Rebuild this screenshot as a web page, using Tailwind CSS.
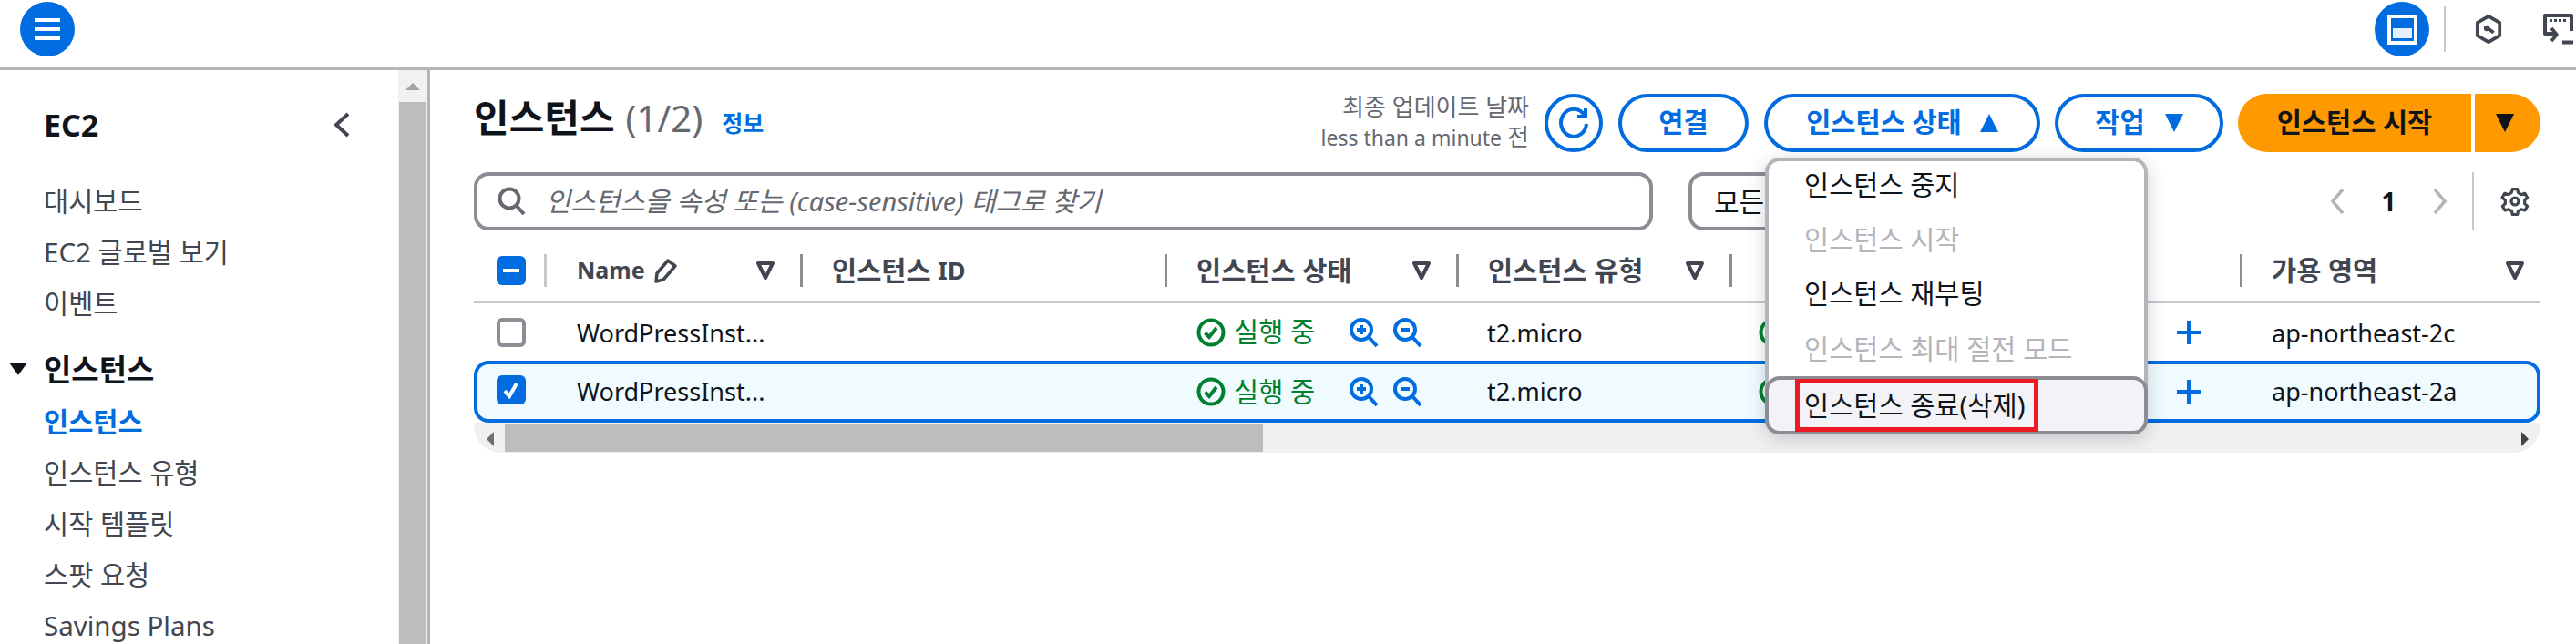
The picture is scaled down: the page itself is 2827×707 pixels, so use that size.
<!DOCTYPE html>
<html lang="ko">
  <head>
    <meta charset="UTF-8" />
    <title>인스턴스 - EC2</title>
    <script src="https://cdn.jsdelivr.net/npm/@tailwindcss/browser@4"></script>
  </head>
  <body class="w-[2827px] h-[707px] overflow-hidden bg-white text-[#0f141a] font-['Noto_Sans','Noto_Sans_CJK_KR',sans-serif]">
    <!-- top bar -->
    <header class="h-[77px] border-b-[3px] border-[#b4b4bb] flex items-center pb-[10px] pl-[22px] pr-[3px]">
      <button class="w-[60px] h-[60px] rounded-full bg-[#006ce0] flex flex-col items-center justify-center gap-[6px]">
        <span class="block w-[28px] h-[4px] bg-white"></span>
        <span class="block w-[28px] h-[4px] bg-white"></span>
        <span class="block w-[28px] h-[4px] bg-white"></span>
      </button>
      <div class="flex-1"></div>
      <button class="w-[60px] h-[60px] rounded-full bg-[#006ce0] flex items-center justify-center">
        <span class="w-[33px] h-[33px] border-[4px] border-white bg-[#006ce0] flex items-end justify-center pb-[3px]"><span class="block w-[21px] h-[11px] bg-white/90"></span></span>
      </button>
      <div class="w-[2px] h-[50px] bg-[#c6c6cd] ml-[16px] mr-[32px]"></div>
      <svg class="w-[30px] h-[32px] text-[#424650] mr-[45px]" viewBox="0 0 32 34" fill="none" stroke="currentColor" stroke-width="4" stroke-linejoin="round">
        <path d="M16 2 29 9.500V24.500L16 32 3 24.500V9.500Z" />
        <circle cx="14" cy="16" r="2.500" fill="currentColor" stroke-width="2" />
        <path d="M15 16 22 21" />
      </svg>
      <svg class="w-[33px] h-[34px] text-[#424650]" viewBox="0 0 33 34" fill="none" stroke="currentColor" stroke-width="4" stroke-linejoin="round">
        <path d="M11 22H2V2H31V19" />
        <path d="M7 7.500h3M12 7.500h3M17 7.500h3M22 7.500h3" stroke-width="3" />
        <path d="M9 16 15 23 9 30M4 23H14" stroke-width="3.500" />
        <path d="M21 31.500H33" stroke-width="4" />
      </svg>
    </header>

    <div class="flex h-[630px]">
      <!-- side navigation -->
      <aside class="w-[472px] shrink-0 flex border-r-[3px] border-[#b4b4bb]">
        <nav class="w-[437px] shrink-0 pl-[48px] pr-[48px] text-[29.5px] text-[#424650]">
          <div class="h-[116px] pt-[4px] flex items-center justify-between pr-[4px]">
            <span class="text-[34px] font-bold text-[#0f141a]">EC2</span>
            <svg class="w-[20px] h-[30px]" viewBox="0 0 20 30" fill="none" stroke="#424650" stroke-width="4"><path d="M17 3 4 15 17 27" /></svg>
          </div>
          <ul class="flex flex-col">
            <li class="h-[56px] flex items-center">대시보드</li>
            <li class="h-[56px] flex items-center">EC2 글로벌 보기</li>
            <li class="h-[56px] flex items-center">이벤트</li>
          </ul>
          <div class="relative h-[58px] mt-[16px] flex items-center font-bold text-[#0f141a] text-[33px]">
            <span class="absolute left-[-38px] top-[21px] w-0 h-0 border-x-[10px] border-t-[14px] border-x-transparent border-t-[#0f141a]"></span>
            인스턴스
          </div>
          <ul class="flex flex-col">
            <li class="h-[56px] flex items-center font-bold text-[#006ce0]">인스턴스</li>
            <li class="h-[56px] flex items-center">인스턴스 유형</li>
            <li class="h-[56px] flex items-center">시작 템플릿</li>
            <li class="h-[56px] flex items-center">스팟 요청</li>
            <li class="h-[56px] flex items-center">Savings Plans</li>
          </ul>
        </nav>
        <div class="w-[32px] bg-[#f1f1f1] flex flex-col items-center">
          <div class="h-[35px] flex items-center justify-center"><span class="w-0 h-0 border-x-[8px] border-b-[8px] border-x-transparent border-b-[#a3a3a3]"></span></div>
          <div class="w-[30px] flex-1 bg-[#bdbdbd]"></div>
        </div>
      </aside>

      <!-- main content -->
      <main class="relative flex-1 pl-[48px] pr-[39px] pt-[24px]">
        <div class="flex items-start justify-between h-[64px]">
          <div class="flex items-baseline">
            <h1 class="text-[42px] font-bold leading-[56px]">인스턴스</h1>
            <span class="text-[40px] leading-[56px] text-[#656871] ml-[12px]">(1/2)</span>
            <a class="text-[25px] font-bold text-[#006ce0] ml-[21px]">정보</a>
          </div>
          <div class="flex items-center">
            <div class="text-right text-[23px] leading-[33px] text-[#656871] mr-[17px]">
              <div class="text-[26px]">최종 업데이트 날짜</div>
              <div>less than a minute <span class="text-[26px]">전</span></div>
            </div>
            <button class="w-[64px] h-[64px] rounded-full border-[4px] border-[#006ce0] bg-white flex items-center justify-center mr-[17px]">
              <svg class="w-[34px] h-[36px]" viewBox="0 0 34 36" fill="none" stroke="#006ce0" stroke-width="4"><path d="M29 10A14 15 0 1 0 31 19" /><path d="M30 2V11H21" stroke-linejoin="round" /></svg>
            </button>
            <button class="w-[143px] h-[64px] rounded-full border-[4px] border-[#006ce0] bg-white text-[29.5px] font-bold text-[#006ce0] mr-[17px]">연결</button>
            <button class="w-[303px] h-[64px] rounded-full border-[4px] border-[#006ce0] bg-white text-[29.5px] font-bold text-[#006ce0] flex items-center justify-center gap-[20px] mr-[16px]">
              인스턴스 상태
              <span class="w-0 h-0 border-x-[10px] border-b-[20px] border-x-transparent border-b-[#006ce0]"></span>
            </button>
            <button class="w-[185px] h-[64px] rounded-full border-[4px] border-[#006ce0] bg-white text-[29.5px] font-bold text-[#006ce0] flex items-center justify-center gap-[22px] mr-[16px]">
              작업
              <span class="w-0 h-0 border-x-[10px] border-t-[20px] border-x-transparent border-t-[#006ce0]"></span>
            </button>
            <div class="flex h-[64px] text-[29.5px] font-bold">
              <button class="w-[256px] rounded-l-full bg-[#ff9900]">인스턴스 시작</button>
              <button class="w-[72px] ml-[4px] rounded-r-full bg-[#ff9900] flex items-center justify-center pr-[6px]"><span class="w-0 h-0 border-x-[10px] border-t-[20px] border-x-transparent border-t-[#0f141a]"></span></button>
            </div>
          </div>
        </div>

        <!-- filter row -->
        <div class="flex items-center h-[64px] mt-[24px]">
          <div class="w-[1294px] h-[64px] rounded-[16px] border-[4px] border-[#8c8c94] flex items-center pl-[22px]">
            <svg class="w-[32px] h-[32px] shrink-0" viewBox="0 0 32 32" fill="none" stroke="#656871" stroke-width="4"><circle cx="13" cy="13" r="10.500" /><path d="M20.500 20.500 29 30" /></svg>
            <span class="italic text-[29.5px] text-[#656871] ml-[21px]">인스턴스을 속성 또는 <span class="text-[29px]">(case-sensitive)</span> 태그로 찾기</span>
          </div>
          <div class="w-[240px] h-[64px] ml-[39px] rounded-[16px] border-[4px] border-[#8c8c94] flex items-center pl-[24px] text-[30px] text-[#0f141a]">모든</div>
          <div class="flex-1 flex items-center justify-end text-[#b4b4bb] relative h-[64px] pr-[12px]">
            <svg class="w-[18px] h-[32px]" viewBox="0 0 18 32" fill="none" stroke="currentColor" stroke-width="3.500"><path d="M15 3 4 16 15 29" /></svg>
            <span class="w-[95px] text-center text-[28px] font-bold text-[#0f141a]">1</span>
            <svg class="w-[18px] h-[32px] mr-[26px]" viewBox="0 0 18 32" fill="none" stroke="currentColor" stroke-width="3.500"><path d="M3 3 14 16 3 29" /></svg>
            <span class="w-[2px] h-[64px] bg-[#c6c6cd] mr-[29px]"></span>
            <svg class="w-[32px] h-[32px]" viewBox="0 0 24 24" fill="none" stroke="#424650" stroke-width="2.400" stroke-linejoin="round"><circle cx="12" cy="12" r="3" /><path d="M10 2h4l.7 3 2.500 1.400 3-.9 2 3.500-2.200 2.100v2.800l2.200 2.100-2 3.500-3-.9-2.500 1.400-.7 3h-4l-.7-3-2.500-1.400-3 .9-2-3.500 2.200-2.100v-2.800L1.500 9l2-3.500 3 .9L9 5Z" /></svg>
          </div>
        </div>

        <!-- instance table -->
        <div class="mt-[15px] text-[27px]">
          <div class="h-[65px] border-b-[3px] border-[#c6c6cd] grid grid-cols-[77px_281px_400px_320px_300px_560px_330px] items-center pb-[4px] font-bold text-[#424650] text-[29.5px]">
            <div class="pl-[25px]">
              <span class="w-[32px] h-[32px] rounded-[6px] bg-[#006ce0] flex items-center justify-center"><span class="w-[18px] h-[4px] bg-white"></span></span>
            </div>
            <div class="h-[36px] border-l-[3px] border-[#c6c6cd] pl-[33px] pr-[28px] flex items-center justify-between">
              <span class="flex items-center gap-[8px] text-[25px]">Name
                <svg class="w-[28px] h-[30px]" viewBox="0 0 28 30" fill="none" stroke="#424650" stroke-width="3.500" stroke-linejoin="round"><path d="M4 27 5 18 17 4 25 10 12 25Z" /></svg>
              </span>
              <svg class="w-[20px] h-[22px]" viewBox="0 0 20 22" fill="none" stroke="#424650" stroke-width="4" stroke-linejoin="round"><path d="M2 3H18L10 19Z" /></svg>
            </div>
            <div class="h-[36px] border-l-[3px] border-[#8c8c94] pl-[32px] flex items-center whitespace-pre">인스턴스 <span class="text-[27px]">ID</span></div>
            <div class="h-[36px] border-l-[3px] border-[#8c8c94] pl-[32px] pr-[28px] flex items-center justify-between">
              인스턴스 상태
              <svg class="w-[20px] h-[22px]" viewBox="0 0 20 22" fill="none" stroke="#424650" stroke-width="4" stroke-linejoin="round"><path d="M2 3H18L10 19Z" /></svg>
            </div>
            <div class="h-[36px] border-l-[3px] border-[#8c8c94] pl-[32px] pr-[28px] flex items-center justify-between">
              인스턴스 유형
              <svg class="w-[20px] h-[22px]" viewBox="0 0 20 22" fill="none" stroke="#424650" stroke-width="4" stroke-linejoin="round"><path d="M2 3H18L10 19Z" /></svg>
            </div>
            <div class="h-[36px] border-l-[3px] border-[#8c8c94]"></div>
            <div class="h-[36px] border-l-[3px] border-[#8c8c94] pl-[32px] pr-[18px] flex items-center justify-between">
              가용 영역
              <svg class="w-[20px] h-[22px]" viewBox="0 0 20 22" fill="none" stroke="#424650" stroke-width="4" stroke-linejoin="round"><path d="M2 3H18L10 19Z" /></svg>
            </div>
          </div>

          <div class="h-[63px] grid grid-cols-[77px_281px_400px_320px_300px_560px_330px] items-center">
            <div class="pl-[25px]"><span class="block w-[32px] h-[32px] rounded-[6px] border-[4px] border-[#8c8c94] bg-white"></span></div>
            <div class="pl-[36px] pt-[3px]">WordPressInst...</div>
            <div></div>
            <div class="pl-[35px] flex items-center text-[#00802f]">
              <svg class="w-[32px] h-[32px] shrink-0" viewBox="0 0 32 32" fill="none" stroke="#00802f" stroke-width="4"><circle cx="16" cy="16" r="13.500" /><path d="M9.500 16.500 14 21 22 11" /></svg>
              <span class="ml-[9px] w-[90px] whitespace-nowrap text-[29.5px]">실행 중</span>
              <svg class="w-[34px] h-[34px] ml-[36px] shrink-0" viewBox="0 0 34 34" fill="none" stroke="#006ce0" stroke-width="4"><circle cx="14" cy="14" r="11" /><path d="M22 22 31 32" /><path d="M9 14H19M14 9V19" /></svg>
              <svg class="w-[34px] h-[34px] ml-[14px] shrink-0" viewBox="0 0 34 34" fill="none" stroke="#006ce0" stroke-width="4"><circle cx="14" cy="14" r="11" /><path d="M22 22 31 32" /><path d="M9 14H19" /></svg>
            </div>
            <div class="pl-[34px] pt-[3px]">t2.micro</div>
            <div class="pl-[32px] pr-[43px] flex items-center justify-between">
              <svg class="w-[32px] h-[32px]" viewBox="0 0 32 32" fill="none" stroke="#00802f" stroke-width="4"><circle cx="16" cy="16" r="13.500" /></svg>
              <svg class="w-[26px] h-[26px]" viewBox="0 0 26 26" fill="none" stroke="#006ce0" stroke-width="4"><path d="M13 0V26M0 13H26" /></svg>
            </div>
            <div class="pl-[35px] pt-[3px]">ap-northeast-2c</div>
          </div>

          <div class="h-[68px] rounded-[16px] border-[4px] border-[#006ce0] bg-[#f0fbff] grid grid-cols-[73px_281px_400px_320px_300px_560px_326px] items-center">
            <div class="pl-[21px] pb-[4px]">
              <span class="w-[32px] h-[32px] rounded-[6px] bg-[#006ce0] flex items-center justify-center">
                <svg class="w-[20px] h-[20px]" viewBox="0 0 20 20" fill="none" stroke="white" stroke-width="4"><path d="M3 11 8 17 16 3" /></svg>
              </span>
            </div>
            <div class="pl-[36px]">WordPressInst...</div>
            <div></div>
            <div class="pl-[35px] flex items-center text-[#00802f]">
              <svg class="w-[32px] h-[32px] shrink-0" viewBox="0 0 32 32" fill="none" stroke="#00802f" stroke-width="4"><circle cx="16" cy="16" r="13.500" /><path d="M9.500 16.500 14 21 22 11" /></svg>
              <span class="ml-[9px] w-[90px] whitespace-nowrap text-[29.5px]">실행 중</span>
              <svg class="w-[34px] h-[34px] ml-[36px] shrink-0" viewBox="0 0 34 34" fill="none" stroke="#006ce0" stroke-width="4"><circle cx="14" cy="14" r="11" /><path d="M22 22 31 32" /><path d="M9 14H19M14 9V19" /></svg>
              <svg class="w-[34px] h-[34px] ml-[14px] shrink-0" viewBox="0 0 34 34" fill="none" stroke="#006ce0" stroke-width="4"><circle cx="14" cy="14" r="11" /><path d="M22 22 31 32" /><path d="M9 14H19" /></svg>
            </div>
            <div class="pl-[34px]">t2.micro</div>
            <div class="pl-[32px] pr-[43px] flex items-center justify-between">
              <svg class="w-[32px] h-[32px]" viewBox="0 0 32 32" fill="none" stroke="#00802f" stroke-width="4"><circle cx="16" cy="16" r="13.500" /></svg>
              <svg class="w-[26px] h-[26px]" viewBox="0 0 26 26" fill="none" stroke="#006ce0" stroke-width="4"><path d="M13 0V26M0 13H26" /></svg>
            </div>
            <div class="pl-[35px]">ap-northeast-2a</div>
          </div>

          <!-- horizontal scrollbar -->
          <div class="h-[33px] pt-[2px] bg-[#f0f0f0] rounded-b-[30px] flex items-stretch">
            <div class="w-[34px] flex items-center justify-center pl-[2px]"><span class="w-0 h-0 border-y-[8px] border-r-[8px] border-y-transparent border-r-[#6e6e6e]"></span></div>
            <div class="w-[832px] h-[30px] bg-[#bdbdbd]"></div>
            <div class="flex-1 flex items-center justify-end pr-[13px]"><span class="w-0 h-0 border-y-[8px] border-l-[8px] border-y-transparent border-l-[#424242]"></span></div>
          </div>
        </div>

        <!-- instance state menu -->
        <div class="absolute left-[1465px] top-[96px] w-[420px] h-[304px] bg-white rounded-[16px] border-[4px] border-[#b4b4bb] shadow-[0_4px_20px_rgba(0,7,22,0.18)] text-[29.5px]">
          <div class="h-[59px] pl-[39px] pb-[6px] flex items-center">인스턴스 중지</div>
          <div class="h-[59px] pl-[39px] pb-[4px] flex items-center text-[#b4b4bb]">인스턴스 시작</div>
          <div class="h-[59px] pl-[39px] pb-[4px] flex items-center">인스턴스 재부팅</div>
          <div class="h-[59px] pl-[39px] flex items-center text-[#b4b4bb]">인스턴스 최대 절전 모드</div>
          <div class="h-[64px] -mx-[4px] rounded-[16px] border-[4px] border-[#8c8c94] bg-[#f3f3f7] pl-[29px] flex items-center">
            <span class="h-[58px] border-[5px] border-[#ed1c24] pl-[5px] pr-[9px] flex items-center">인스턴스 종료(삭제)</span>
          </div>
        </div>
      </main>
    </div>
  </body>
</html>
